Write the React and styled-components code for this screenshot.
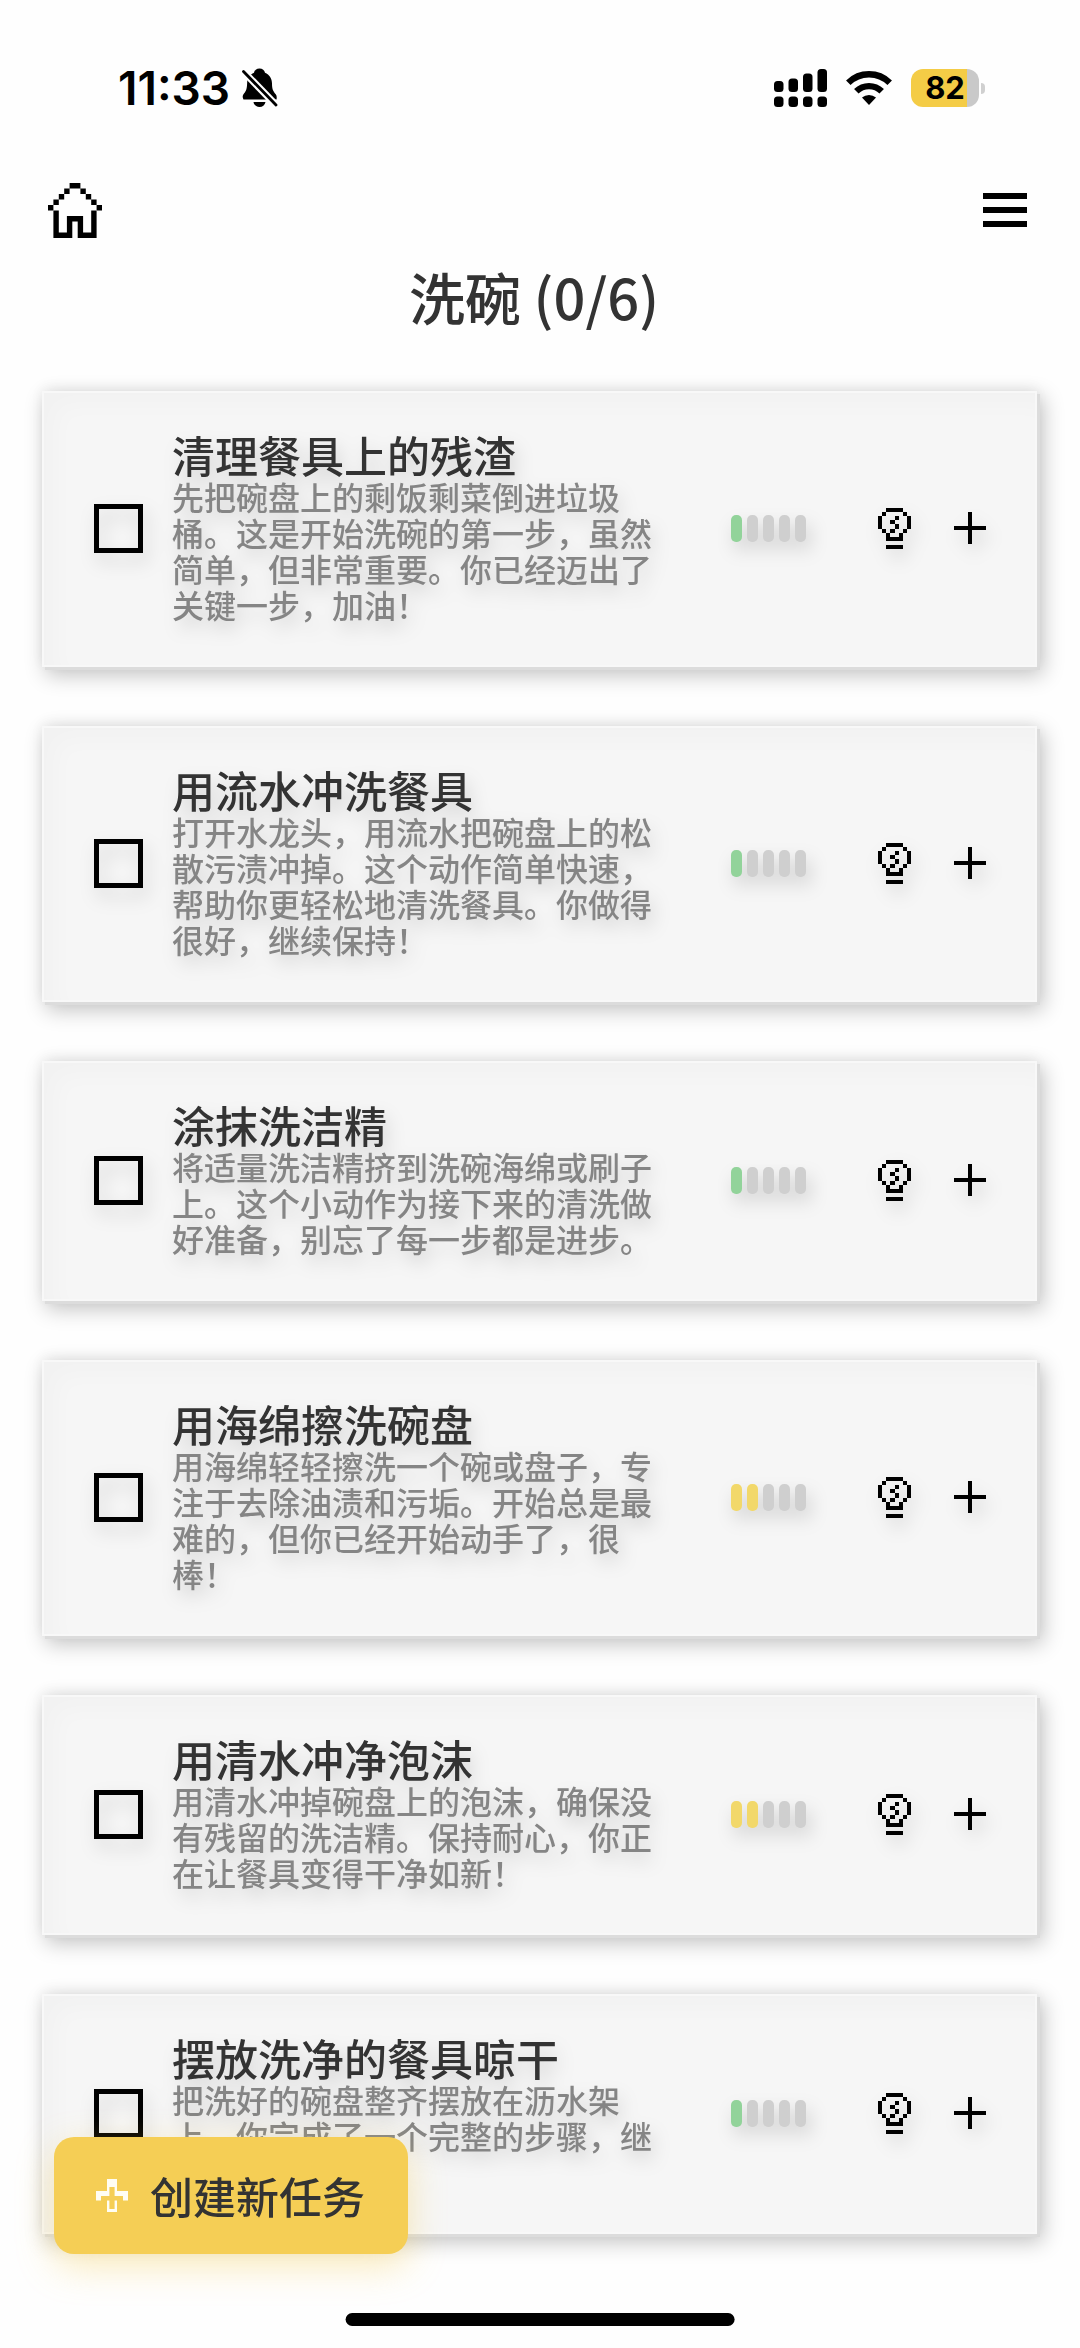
import React from "react";
import styled, { createGlobalStyle } from "styled-components";

const GlobalStyle = createGlobalStyle`
  * { box-sizing: border-box; }
  body {
    margin: 0;
    background: #fefefe;
    color: #333;
    font-family: "Noto Sans CJK SC", "Noto Sans", sans-serif;
  }
  button { font: inherit; color: inherit; border: 0; padding: 0; background: none; cursor: pointer; }
`;

const Screen = styled.main`
  min-height: 100vh;
  padding-bottom: 108px;
`;

const StatusBar = styled.header`
  display: flex;
  align-items: center;
  justify-content: space-between;
  height: 48px;
  margin-top: 64px;
  padding: 0 95px 0 118px;
  color: #000;
`;

const StatusGroup = styled.div`
  display: flex;
  align-items: center;
  gap: ${(p) => p.$gap}px;
`;

const Clock = styled.time`
  font: 600 46px/48px Inter, sans-serif;
`;

const Battery = styled.div`
  display: flex;
  align-items: center;
  gap: 2px;
`;

const BatteryBody = styled.div`
  width: 68px;
  height: 38px;
  border-radius: 12px;
  background: linear-gradient(90deg, #f4cc46 82%, #c9c9c9 82%);
  font: 700 31px/38px Inter, sans-serif;
  text-align: center;
`;

const BatteryTip = styled.span`
  width: 4px;
  height: 11px;
  border-radius: 0 6px 6px 0;
  background: #d0d0d0;
`;

const NavBar = styled.nav`
  display: flex;
  align-items: center;
  justify-content: space-between;
  height: 56px;
  margin-top: 70px;
  padding: 0 53px 0 48px;
`;

const IconButton = styled.button`
  display: flex;
  flex: none;
  svg { display: block; }
`;

const Title = styled.h1`
  margin: 26px 0 0;
  padding-right: 12px;
  font-size: 56px;
  font-weight: 500;
  line-height: 64px;
  text-align: center;
`;

const TaskList = styled.ul`
  display: flex;
  flex-direction: column;
  gap: 59px;
  margin: 63px 43px 0 42px;
  padding: 0;
  list-style: none;
`;

const Card = styled.li`
  background: #f6f6f6;
  box-shadow:
    inset 0 0 0 2px #f8f8f8,
    inset 14px 14px 24px rgba(0, 0, 0, 0.02),
    3px 3px 0 #dcdcdc,
    5px 7px 20px 1px rgba(0, 0, 0, 0.24),
    0 -3px 12px rgba(0, 0, 0, 0.05);
`;

const CardRow = styled.div`
  display: flex;
  align-items: center;
  padding: 39px 51px 41px 52px;
  filter: drop-shadow(4px 9px 9px rgba(0, 0, 0, 0.15));
`;

const Check = styled.input`
  appearance: none;
  flex: none;
  width: 49px;
  height: 49px;
  margin: 0 29px 0 0;
  border: 5px solid #000;
  &:checked { background: #000 content-box; padding: 6px; }
`;

const TaskText = styled.div`
  flex: 1;
  min-width: 0;
  margin-right: 72px;
  padding-bottom: 4px;
`;

const TaskName = styled.label`
  display: block;
  font-size: 43px;
  font-weight: 500;
  line-height: 48px;
`;

const TaskNote = styled.p`
  margin: 0;
  color: #858585;
  font-size: 32px;
  font-weight: 500;
  line-height: 36px;
`;

const Meter = styled.div`
  display: flex;
  gap: 5px;
  margin-right: 72px;
`;

const levelColors = { 1: "#92d39a", 2: "#f2d86a" };

const Pill = styled.span`
  width: 11px;
  height: 27px;
  border-radius: 5px;
  background: ${(p) => (p.$on ? levelColors[p.$level] : "#cfcfcf")};
`;

const CardActions = styled.div`
  display: flex;
  align-items: center;
  gap: 43px;
`;

const CreateButton = styled.button`
  && {
    position: fixed;
    left: 54px;
    bottom: 94px;
    display: flex;
    align-items: center;
    gap: 22px;
    padding: 34px 43px 34px 42px;
    border-radius: 20px;
    background: #f5ce55;
    box-shadow: 0 12px 36px rgba(245, 206, 85, 0.4);
    font-size: 43px;
    font-weight: 500;
    line-height: 49px;
  }
`;

const HomeIndicator = styled.div`
  position: fixed;
  left: 50%;
  bottom: 22px;
  width: 36%;
  height: 13px;
  border-radius: 7px;
  background: #000;
  transform: translateX(-50%);
`;

/* Draws a bitmap: every "#" in the rows becomes one square. */
function PixelIcon({ rows, width, height }) {
  const cols = rows[0].length;
  let d = "";
  rows.forEach((row, y) => {
    for (const run of row.matchAll(/#+/g)) {
      d += `M${run.index} ${y}h${run[0].length}v1h-${run[0].length}z`;
    }
  });
  return (
    <svg width={width} height={height} viewBox={`0 0 ${cols} ${rows.length}`} fill="#000" shapeRendering="crispEdges" aria-hidden="true">
      <path d={d} />
    </svg>
  );
}

const bulbRows = [
  "..####..",
  ".#....#.",
  "#...#..#",
  "#..#...#",
  "#...#..#",
  ".#.#..#.",
  "..#..#..",
  "..####..",
  "........",
  "..####..",
];

const HomeIcon = () => (
  <svg width="54" height="55" viewBox="0 0 20 20" preserveAspectRatio="none" aria-hidden="true">
    <path d="M8 0h4v2h-4zM6 2h2v2h-2zM12 2h2v2h-2zM4 4h2v2h-2zM14 4h2v2h-2zM2 6h2v2h-2zM16 6h2v2h-2zM0 8h2v2h-2zM18 8h2v2h-2z" />
    <path d="M2 10h2v8h3v-6h6v6h3v-8h2v10h-7v-6h-2v6h-7z" />
  </svg>
);

const MenuIcon = () => (
  <svg width="44" height="34" viewBox="0 0 44 34" shapeRendering="crispEdges" aria-hidden="true">
    <path d="M0 0h44v6H0zM0 14h44v6H0zM0 28h44v6H0z" />
  </svg>
);

const BellOffIcon = () => (
  <svg width="36" height="40" viewBox="0 0 36 40" aria-hidden="true">
    <path d="M17.5 0.500c3 0 5 1.700 5.500 4.200C27.500 6.500 30 10.500 30 15.500c0 5.500 1 7.500 3.500 10.500 1.200 1.500 1.500 3 1 5.500H1.500C0 29 .8 27 2 25.500 4.500 22.500 5 20 5.200 14 5.400 9.500 8 6.300 12 4.700c.5-2.500 2.500-4.200 5.500-4.200z" />
    <path d="M11.500 34h12c-.6 3-3 5-6 5s-5.400-2-6-5z" />
    <path d="M-1 1L34 37" stroke="#fefefe" strokeWidth="7" />
    <path d="M1.500 3.500L34 37" stroke="#000" strokeWidth="2.800" strokeLinecap="round" />
  </svg>
);

const SignalIcon = () => (
  <svg width="53" height="38" viewBox="0 0 53 38" aria-hidden="true">
    <rect x="0" y="12" width="9.500" height="11" rx="3.500" />
    <rect x="14.500" y="9.500" width="9.500" height="13.500" rx="3.500" />
    <rect x="29" y="4.500" width="9.500" height="18.500" rx="3.500" />
    <rect x="43.500" y="0" width="9.500" height="23" rx="3.500" />
    <rect x="0" y="27.500" width="9.500" height="10.500" rx="3.500" />
    <rect x="14.500" y="27.500" width="9.500" height="10.500" rx="3.500" />
    <rect x="29" y="27.500" width="9.500" height="10.500" rx="3.500" />
    <rect x="43.500" y="27.500" width="9.500" height="10.500" rx="3.500" />
  </svg>
);

const WifiIcon = () => (
  <svg width="46" height="34" viewBox="0 0 46 34" aria-hidden="true">
    <g fill="none" stroke="#000" strokeWidth="6.400">
      <path d="M2.300 11.800a29.500 29.500 0 0 1 41.400 0" />
      <path d="M10.300 20.300a18.200 18.200 0 0 1 25.400 0" />
    </g>
    <path d="M23 34l-7-7.400a10.500 10.500 0 0 1 14 0z" />
  </svg>
);

const CreateIcon = () => (
  <svg width="32" height="33" viewBox="0 0 32 33" fill="#fffdf2" aria-hidden="true">
    <path d="M11 0h10v12h11v9.500h-5v-4.500h-8.400V8h-5.200v9H5v4.500H0V12h11z" />
    <path d="M11 21.500h2.400V30h5.200v-8.500H21V33H11z" />
  </svg>
);

const tasks = [
  { name: "清理餐具上的残渣", level: 1, note: "先把碗盘上的剩饭剩菜倒进垃圾桶。这是开始洗碗的第一步，虽然简单，但非常重要。你已经迈出了关键一步，加油！" },
  { name: "用流水冲洗餐具", level: 1, note: "打开水龙头，用流水把碗盘上的松散污渍冲掉。这个动作简单快速，帮助你更轻松地清洗餐具。你做得很好，继续保持！" },
  { name: "涂抹洗洁精", level: 1, note: "将适量洗洁精挤到洗碗海绵或刷子上。这个小动作为接下来的清洗做好准备，别忘了每一步都是进步。" },
  { name: "用海绵擦洗碗盘", level: 2, note: "用海绵轻轻擦洗一个碗或盘子，专注于去除油渍和污垢。开始总是最难的，但你已经开始动手了，很棒！" },
  { name: "用清水冲净泡沫", level: 2, note: "用清水冲掉碗盘上的泡沫，确保没有残留的洗洁精。保持耐心，你正在让餐具变得干净如新！" },
  { name: "摆放洗净的餐具晾干", level: 1, note: "把洗好的碗盘整齐摆放在沥水架上。你完成了一个完整的步骤，继续保持！" },
];

function Task({ id, name, note, level }) {
  return (
    <Card>
      <CardRow>
        <Check type="checkbox" id={id} />
        <TaskText>
          <TaskName htmlFor={id}>{name}</TaskName>
          <TaskNote>{note}</TaskNote>
        </TaskText>
        <Meter role="img" aria-label={`${level}/5`}>
          {[1, 2, 3, 4, 5].map((n) => (
            <Pill key={n} $on={n <= level} $level={level} />
          ))}
        </Meter>
        <CardActions>
          <IconButton type="button" aria-label="提示">
            <PixelIcon rows={bulbRows} width={33} height={41} />
          </IconButton>
          <IconButton type="button" aria-label="添加">
            <svg width="32" height="32" viewBox="0 0 32 32" shapeRendering="crispEdges" aria-hidden="true">
              <path d="M14 0h4v14h14v4H18v14h-4V18H0v-4h14z" />
            </svg>
          </IconButton>
        </CardActions>
      </CardRow>
    </Card>
  );
}

export default function App() {
  return (
    <Screen>
      <GlobalStyle />
      <StatusBar>
        <StatusGroup $gap={12}>
          <Clock>11:33</Clock>
          <BellOffIcon />
        </StatusGroup>
        <StatusGroup $gap={19}>
          <SignalIcon />
          <WifiIcon />
          <Battery>
            <BatteryBody>82</BatteryBody>
            <BatteryTip />
          </Battery>
        </StatusGroup>
      </StatusBar>
      <NavBar>
        <IconButton type="button" aria-label="主页"><HomeIcon /></IconButton>
        <IconButton type="button" aria-label="菜单"><MenuIcon /></IconButton>
      </NavBar>
      <Title>洗碗 (0/6)</Title>
      <TaskList>
        {tasks.map((task, i) => (
          <Task key={task.name} id={`task-${i}`} {...task} />
        ))}
      </TaskList>
      <CreateButton type="button">
        <CreateIcon />
        创建新任务
      </CreateButton>
      <HomeIndicator />
    </Screen>
  );
}
